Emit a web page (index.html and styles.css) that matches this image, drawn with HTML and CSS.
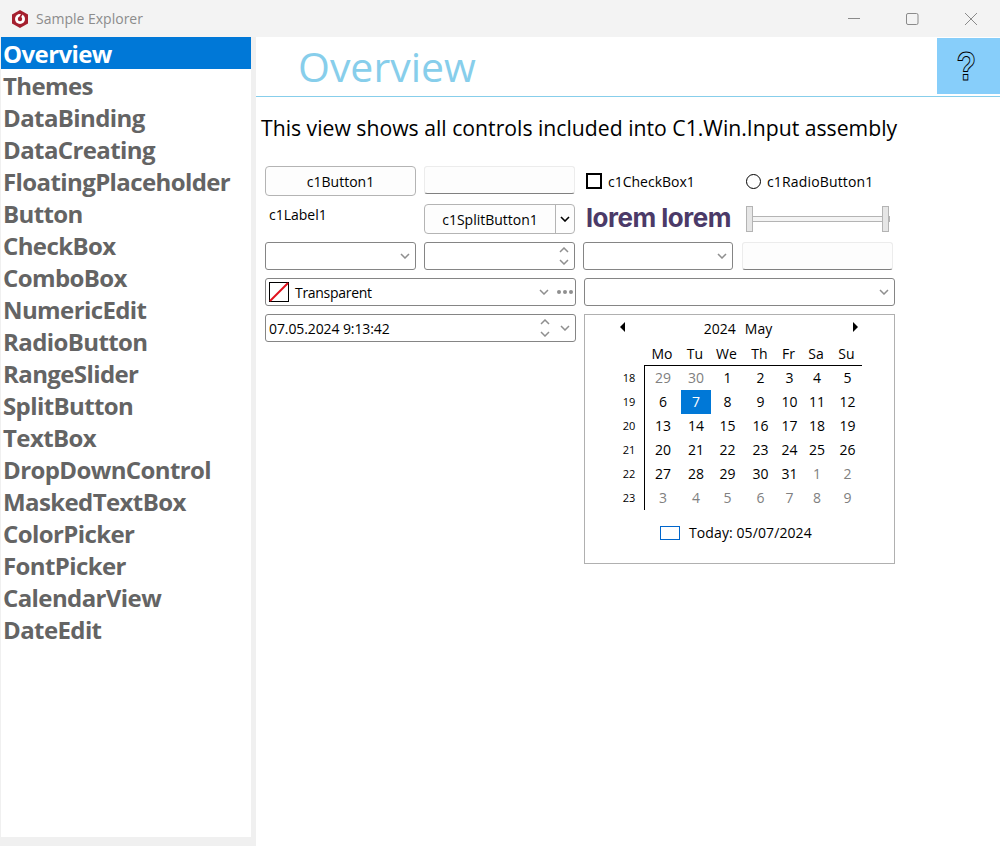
FILE: index.html
```html
<!DOCTYPE html>
<html lang="en">
<head>
  <meta charset="UTF-8" />
  <title>Sample Explorer</title>
  <link rel="stylesheet" href="styles.css">
</head>
<body>

<div class="titlebar">
  <svg class="app-icon" width="18" height="18" viewBox="0 0 18 18">
    <polygon points="9,0 17,4.5 17,13.5 9,18 1,13.5 1,4.5" fill="#a5202f" />
    <circle cx="9" cy="9" r="5" fill="#fff" />
    <circle cx="9" cy="9" r="2.2" fill="#a5202f" />
    <path d="M11 4 L8 9" stroke="#a5202f" stroke-width="1.6" />
  </svg>
  <span class="app-title">Sample Explorer</span>
  <div class="win-buttons">
    <svg width="14" height="14" viewBox="0 0 14 14"><path d="M0 6.5H12" stroke="#8a8a8a" /></svg>
    <svg width="14" height="14" viewBox="0 0 14 14"><rect x="0.5" y="1.5" width="11.5" height="11" rx="1.5" fill="none" stroke="#8a8a8a" /></svg>
    <svg width="14" height="14" viewBox="0 0 14 14"><path d="M1 1L13 13M13 1L1 13" stroke="#8a8a8a" /></svg>
  </div>
</div>

<div class="main">
  <ul class="sidebar">
    <li class="active">Overview</li>
    <li>Themes</li>
    <li>DataBinding</li>
    <li>DataCreating</li>
    <li>FloatingPlaceholder</li>
    <li>Button</li>
    <li>CheckBox</li>
    <li>ComboBox</li>
    <li>NumericEdit</li>
    <li>RadioButton</li>
    <li>RangeSlider</li>
    <li>SplitButton</li>
    <li>TextBox</li>
    <li>DropDownControl</li>
    <li>MaskedTextBox</li>
    <li>ColorPicker</li>
    <li>FontPicker</li>
    <li>CalendarView</li>
    <li>DateEdit</li>
  </ul>

  <div class="content">
    <div class="header">
      <h1>Overview</h1>
      <div class="help"><span>?</span></div>
    </div>
    <p class="intro">This view shows all controls included into C1.Win.Input assembly</p>

    <div class="controls">
      <div class="btn">c1Button1</div>
      <div class="textbox short"></div>
      <div class="check"><span class="box"></span>c1CheckBox1</div>
      <div class="check radio"><span class="circle"></span>c1RadioButton1</div>

      <div class="label">c1Label1</div>
      <div class="btn split">
        <span class="split-text">c1SplitButton1</span>
        <span class="split-arrow">
          <svg width="10" height="6" viewBox="0 0 10 6"><path d="M1 1L5 5L9 1" fill="none" stroke="#000" stroke-width="1.6" /></svg>
        </span>
      </div>
      <div class="logo">lorem lorem</div>
      <div class="slider">
        <span class="thumb"></span>
        <span class="track"></span>
        <span class="thumb"></span>
        <span class="nub"></span>
      </div>

      <div class="field">
        <svg class="chev" width="10" height="6" viewBox="0 0 10 6"><path d="M1 1L5 5L9 1" /></svg>
      </div>
      <div class="field">
        <span class="spin">
          <svg class="chev" width="10" height="6" viewBox="0 0 10 6"><path d="M1 5L5 1L9 5" /></svg>
          <svg class="chev" width="10" height="6" viewBox="0 0 10 6"><path d="M1 1L5 5L9 1" /></svg>
        </span>
      </div>
      <div class="field col3">
        <svg class="chev" width="10" height="6" viewBox="0 0 10 6"><path d="M1 1L5 5L9 1" /></svg>
      </div>
      <div class="textbox"></div>

      <div class="field wide color">
        <svg class="swatch" width="20" height="20" viewBox="0 0 20 20">
          <rect x="0.5" y="0.5" width="19" height="19" fill="#fff" stroke="#000" />
          <path d="M1 19L19 1" stroke="#e0101c" stroke-width="2" />
        </svg>
        <span class="value">Transparent</span>
        <svg class="chev" width="10" height="6" viewBox="0 0 10 6"><path d="M1 1L5 5L9 1" /></svg>
        <span class="dots"><i></i><i></i><i></i></span>
      </div>
      <div class="field wide right-side">
        <svg class="chev" width="10" height="6" viewBox="0 0 10 6"><path d="M1 1L5 5L9 1" /></svg>
      </div>

      <div class="field wide datefield">
        <span class="value date">07.05.2024 9:13:42</span>
        <span class="spin">
          <svg class="chev" width="10" height="6" viewBox="0 0 10 6"><path d="M1 5L5 1L9 5" /></svg>
          <svg class="chev" width="10" height="6" viewBox="0 0 10 6"><path d="M1 1L5 5L9 1" /></svg>
        </span>
        <svg class="chev date-chev" width="10" height="6" viewBox="0 0 10 6"><path d="M1 1L5 5L9 1" /></svg>
      </div>

      <div class="calendar right-side">
        <div class="cal-head">
          <span class="tri left"></span>
          <span class="cal-title"><span>2024</span><span>May</span></span>
          <span class="tri right"></span>
        </div>
        <div class="cal-body">
          <div class="weeks">
            <span>18</span><span>19</span><span>20</span><span>21</span><span>22</span><span>23</span>
          </div>
          <div class="cal-right">
            <div class="cal-row names">
              <span>Mo</span><span>Tu</span><span>We</span><span>Th</span><span>Fr</span><span>Sa</span><span>Su</span>
            </div>
            <div class="days">
              <div class="cal-row"><span class="off">29</span><span class="off">30</span><span>1</span><span>2</span><span>3</span><span>4</span><span>5</span></div>
              <div class="cal-row"><span>6</span><span class="sel">7</span><span>8</span><span>9</span><span>10</span><span>11</span><span>12</span></div>
              <div class="cal-row"><span>13</span><span>14</span><span>15</span><span>16</span><span>17</span><span>18</span><span>19</span></div>
              <div class="cal-row"><span>20</span><span>21</span><span>22</span><span>23</span><span>24</span><span>25</span><span>26</span></div>
              <div class="cal-row"><span>27</span><span>28</span><span>29</span><span>30</span><span>31</span><span class="off">1</span><span class="off">2</span></div>
              <div class="cal-row"><span class="off">3</span><span class="off">4</span><span class="off">5</span><span class="off">6</span><span class="off">7</span><span class="off">8</span><span class="off">9</span></div>
            </div>
          </div>
        </div>
        <div class="today"><span class="today-box"></span>Today: 05/07/2024</div>
      </div>
    </div>
  </div>
</div>

</body>
</html>
```

FILE: styles.css
```css
* { box-sizing: border-box; }
body {
  margin: 0;
  height: 846px;
  overflow: hidden;
  background: #f0f0f0;
  font-family: "Open Sans", "Noto Sans", sans-serif;
  color: #000;
}

/* title bar */
.titlebar {
  height: 37px;
  background: #f3f3f3;
  display: flex;
  align-items: center;
  padding-left: 11px;
}
.app-title {
  margin-left: 7px;
  font-size: 14px;
  color: #8c8c8c;
}
.win-buttons {
  margin-left: auto;
  display: flex;
  gap: 44px;
  padding-right: 22px;
}

.main {
  display: flex;
  height: 809px;
}

/* left list */
.sidebar {
  list-style: none;
  margin: 0 0 0 1px;
  padding: 0;
  width: 250px;
  height: 800px;
  background: #fff;
}
.sidebar li {
  height: 32px;
  line-height: 34px;
  padding-left: 2px;
  font-size: 24px;
  font-weight: 700;
  color: #646464;
  letter-spacing: -0.6px;
}
.sidebar li.active {
  background: #0078d7;
  color: #fff;
}

.content {
  margin-left: 5px;
  flex: 1;
  background: #fff;
}
.header {
  height: 60px;
  border-bottom: 1px solid #87ceeb;
  display: flex;
  justify-content: space-between;
  padding-left: 42px;
}
.header h1 {
  margin: 0;
  font-size: 41px;
  font-weight: 400;
  line-height: 58px;
  color: #87ceeb;
}
.help {
  width: 63px;
  height: 56px;
  margin-top: 1px;
  padding-right: 5px;
  background: #87cefa;
  text-align: center;
  font-family: "Liberation Sans", sans-serif;
  font-size: 40px;
  font-weight: 700;
  line-height: 56px;
  color: #87cefa;
  -webkit-text-stroke: 1px #000;
}
.help span {
  display: inline-block;
  transform: scaleX(0.8);
}
.intro {
  margin: 17px 0 0 5px;
  font-size: 21.2px;
  line-height: 28px;
}

/* the control grid */
.controls {
  margin: 24px 0 0 9px;
  display: grid;
  grid-template-columns: repeat(4, 151px);
  grid-template-rows: 30px 30px 28px 28px 28px;
  gap: 8px;
  font-size: 14px;
}
.btn {
  background: #fdfdfd;
  border: 1px solid #b4b4b4;
  border-radius: 4px;
  display: flex;
  align-items: center;
  justify-content: center;
}
.split {
  justify-content: flex-start;
}
.split-text {
  flex: 1;
  text-align: center;
}
.split-arrow {
  width: 19px;
  height: 100%;
  border-left: 1px solid #b4b4b4;
  display: flex;
  align-items: center;
  justify-content: center;
}
.textbox {
  background: #fdfdfd;
  border: 1px solid #ececec;
  border-bottom: 1px solid #808080;
  border-radius: 3px;
}
.textbox.short {
  height: 28px;
}
.label {
  padding: 1px 0 0 4px;
}
.check {
  display: flex;
  align-items: center;
  gap: 6px;
  padding-left: 3px;
}
.radio {
  padding-left: 4px;
  letter-spacing: 0.15px;
}
.box {
  width: 16px;
  height: 16px;
  border: 2px solid #000;
}
.circle {
  width: 15px;
  height: 15px;
  border: 1.5px solid #000;
  border-radius: 50%;
}
.logo {
  padding-left: 3px;
  font-size: 26px;
  line-height: 28px;
  font-weight: 700;
  color: #4b3a68;
  font-family: "Inter", sans-serif;
  letter-spacing: -0.5px;
  white-space: nowrap;
}
.slider {
  display: flex;
  align-items: center;
  padding: 0 3px 0 4px;
}
.thumb {
  width: 7px;
  height: 26px;
  background: #e6e6e6;
  border: 1px solid #b4b4b4;
}
.track {
  flex: 1;
  height: 6px;
  background: #f4f4f4;
  border: solid #b4b4b4;
  border-width: 1px 0;
}
.nub {
  width: 1px;
  height: 6px;
  background: #b4b4b4;
}
.field {
  background: #fff;
  border: 1px solid #858585;
  border-radius: 3px;
  display: flex;
  align-items: center;
  justify-content: flex-end;
  padding: 0 5px 0 3px;
}
.col3 {
  margin-right: 1px;
}
.wide {
  grid-column: span 2;
}
.right-side {
  margin-left: 1px;
  margin-right: -2px;
}
.color {
  margin-right: -1px;
  padding-right: 2px;
}
.datefield {
  margin-right: -1px;
  padding-right: 5px;
}
.chev {
  display: block;
  fill: none;
  stroke: #8f8f8f;
  stroke-width: 1.5;
}
.spin {
  display: flex;
  flex-direction: column;
  gap: 6px;
}
.swatch {
  flex: none;
}
.value {
  margin-left: 6px;
  margin-right: auto;
  letter-spacing: -0.3px;
}
.value.date {
  margin-left: 0;
  letter-spacing: -0.1px;
}
.dots {
  display: flex;
  gap: 2px;
  margin-left: 8px;
}
.dots i {
  width: 4px;
  height: 4px;
  background: #8f8f8f;
  border-radius: 50%;
}
.date-chev {
  margin-left: 10px;
}

/* calendar */
.calendar {
  grid-column: 3 / span 2;
  height: 250px;
  border: 1px solid #b0b0b0;
}
.cal-head {
  height: 26px;
  margin: 0 36px 1px 35px;
  display: flex;
  align-items: center;
  justify-content: space-between;
}
.cal-title {
  display: flex;
  gap: 9px;
  margin-left: -2px;
}
.tri {
  width: 0;
  height: 0;
  margin-top: -2px;
  border-top: 5px solid transparent;
  border-bottom: 5px solid transparent;
}
.tri.left { border-right: 5px solid #000; }
.tri.right { border-left: 5px solid #000; }
.cal-body {
  display: flex;
}
.weeks {
  width: 59px;
  padding-top: 24px;
  display: flex;
  flex-direction: column;
  align-items: center;
  font-size: 11px;
}
.weeks span {
  height: 24px;
  line-height: 24px;
  padding-left: 29px;
}
.cal-right {
  width: 218px;
}
.cal-row {
  display: grid;
  grid-template-columns: 36px 30px 33px 33px 25px 30px 31px;
  height: 24px;
}
.cal-row span {
  text-align: center;
  line-height: 24px;
}
.names {
  border-bottom: 1px solid #000;
}
.names span {
  line-height: 23px;
}
.days {
  border-left: 1px solid #000;
}
.off {
  color: #808080;
}
.sel {
  background: #0078d7;
  color: #fff;
}
.today {
  margin-top: 13px;
  padding-left: 75px;
  display: flex;
  align-items: center;
  gap: 9px;
  letter-spacing: 0.1px;
}
.today-box {
  width: 20px;
  height: 14px;
  border: 1px solid #0066cc;
}
```
